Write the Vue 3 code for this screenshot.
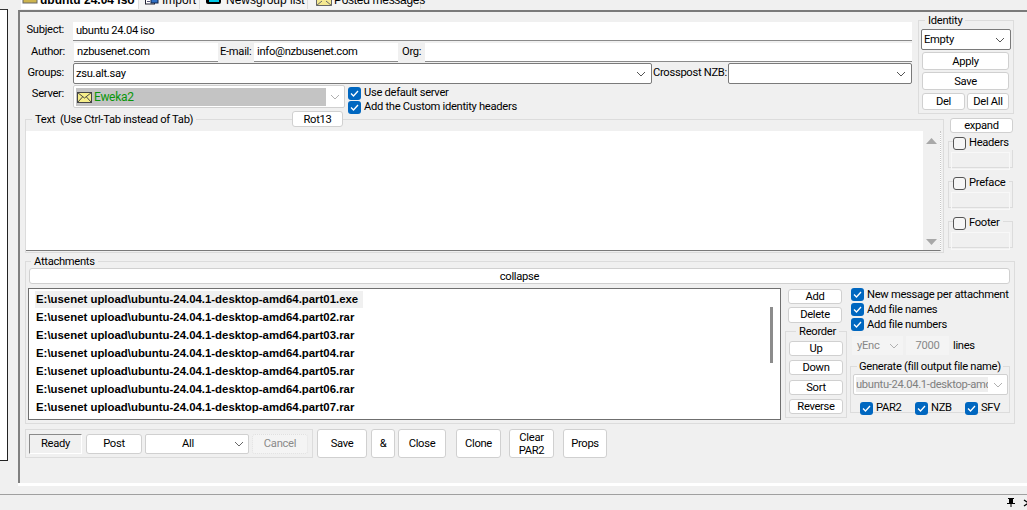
<script setup>
const files = ['part01.exe','part02.rar','part03.rar','part04.rar','part05.rar','part06.rar','part07.rar'].map(
  p => 'E:\\usenet upload\\ubuntu-24.04.1-desktop-amd64.' + p)
</script>

<template>
  <div class="win">
    <div class="top">
      <div class="leftpane"></div>
      <div class="main">
        <div class="tabs">
          <div class="tab active t1">
            <svg width="16" height="6" viewBox="0 0 16 6"><rect x="1" y="-4" width="14" height="7" fill="#cdb44e" stroke="#666"/></svg>
            <b>ubuntu 24.04 iso</b>
          </div>
          <div class="tab t2">
            <svg width="16" height="6" viewBox="0 0 16 6"><rect x="1.5" y="-3" width="9" height="7" fill="#fff" stroke="#223"/><rect x="7" y="-3" width="7" height="6" fill="#2f6fc4" stroke="#124"/><path d="M3 1.5H6" stroke="#557"/></svg>
            <span>Import</span>
          </div>
          <div class="tab t3">
            <svg width="16" height="6" viewBox="0 0 16 6"><rect x="0" y="-3" width="15" height="7" rx="2" fill="#000"/><rect x="3" y="-3" width="10" height="5" fill="#00c8e8"/></svg>
            <span>Newsgroup list</span>
          </div>
          <div class="tab t4">
            <svg width="16" height="6" viewBox="0 0 16 6"><path d="M.5 -3 V5.5 H15.5 V-3 Z" fill="#f4e890" stroke="#666"/><path d="M.5 5.5 L6 1 M15.5 5.5 L10 1" fill="none" stroke="#666"/></svg>
            <span>Posted messages</span>
          </div>
        </div>
        <div class="panel">
          <div class="upper">
            <div class="fields">
              <div class="row r-subject">
                <label class="lab">Subject:</label>
                <div class="edit line w-subject">ubuntu 24.04 iso</div>
              </div>
              <div class="row r-author">
                <label class="lab lab-au">Author:</label>
                <div class="edit line w-144">nzbusenet.com</div>
                <label class="lab2 w-mail">E-mail:</label>
                <div class="edit line w-144">info@nzbusenet.com</div>
                <label class="lab2 w-org">Org:</label>
                <div class="edit line w-orgin"></div>
              </div>
              <div class="row r-groups">
                <label class="lab">Groups:</label>
                <div class="combo dark w-groups">
                  <span>zsu.alt.say</span>
                  <svg class="chev" width="10" height="6" viewBox="0 0 10 6"><path d="M1 1 L5 5 L9 1" fill="none" stroke="#555"/></svg>
                </div>
                <label class="cross">Crosspost NZB:</label>
                <div class="combo dark w-cross">
                  <span></span>
                  <svg class="chev" width="10" height="6" viewBox="0 0 10 6"><path d="M1 1 L5 5 L9 1" fill="none" stroke="#555"/></svg>
                </div>
              </div>
              <div class="row r-server">
                <label class="lab">Server:</label>
                <div class="server">
                  <div class="sel">
                    <svg width="15" height="11" viewBox="0 0 15 11"><rect x=".5" y=".5" width="14" height="10" fill="#f6ee8a" stroke="#444"/><path d="M.5 .5 L7.5 6 L14.5 .5 M.5 10.5 L5.5 5 M14.5 10.5 L9.5 5" fill="none" stroke="#444"/></svg>
                    <span>Eweka2</span>
                  </div>
                  <svg class="chev light" width="10" height="6" viewBox="0 0 10 6"><path d="M1 1 L5 5 L9 1" fill="none" stroke="#b0b0b0"/></svg>
                </div>
                <div class="checks">
                  <div class="chk"><i class="box on"><svg width="13" height="13" viewBox="0 0 13 13"><path d="M3 6.5 L5.5 9 L10 4" fill="none" stroke="#fff" stroke-width="1.3"/></svg></i>Use default server</div>
                  <div class="chk"><i class="box on"><svg width="13" height="13" viewBox="0 0 13 13"><path d="M3 6.5 L5.5 9 L10 4" fill="none" stroke="#fff" stroke-width="1.3"/></svg></i>Add the Custom identity headers</div>
                </div>
              </div>
            </div>
            <fieldset class="identity">
              <legend>Identity</legend>
              <div class="combo dark idsel">
                <span>Empty</span>
                <svg class="chev" width="10" height="6" viewBox="0 0 10 6"><path d="M1 1 L5 5 L9 1" fill="none" stroke="#555"/></svg>
              </div>
              <button class="btn idb">Apply</button>
              <button class="btn idb">Save</button>
              <div class="dels">
                <button class="btn del1">Del</button>
                <button class="btn del2">Del All</button>
              </div>
            </fieldset>
          </div>

          <div class="middle">
            <fieldset class="textgroup">
              <legend>Text&nbsp; (Use Ctrl-Tab instead of Tab)</legend>
              <button class="btn rot">Rot13</button>
              <div class="textarea">
                <div class="vs">
                  <svg width="13" height="8" viewBox="0 0 13 8"><path d="M6.5 1 L12 7 H1 Z" fill="#a8a8a8"/></svg>
                  <svg width="13" height="8" viewBox="0 0 13 8"><path d="M6.5 7 L12 1 H1 Z" fill="#a8a8a8"/></svg>
                </div>
              </div>
            </fieldset>
            <div class="side">
              <button class="btn expand">expand</button>
              <div v-for="n in ['Headers','Preface','Footer']" :key="n" class="sidegroup">
                <div class="sidehead"><i class="box"></i><span>{{ n }}</span></div>
                <div class="sidebox"></div>
              </div>
            </div>
          </div>

          <fieldset class="attach">
            <legend>Attachments</legend>
            <button class="btn collapse">collapse</button>
            <div class="attrow">
              <div class="list">
                <div class="rows">
                  <div v-for="(f,i) in files" :key="f" class="file"><span :class="{ first: i === 0 }">{{ f }}</span></div>
                </div>
                <div class="thumb"></div>
              </div>
              <div class="ops">
                <button class="btn opb">Add</button>
                <button class="btn opb">Delete</button>
                <fieldset class="reorder">
                  <legend>Reorder</legend>
                  <button class="btn opb">Up</button>
                  <button class="btn opb">Down</button>
                  <button class="btn opb">Sort</button>
                  <button class="btn opb">Reverse</button>
                </fieldset>
              </div>
              <div class="opts">
                <div class="chk c2"><i class="box on"><svg width="13" height="13" viewBox="0 0 13 13"><path d="M3 6.5 L5.5 9 L10 4" fill="none" stroke="#fff" stroke-width="1.3"/></svg></i>New message per attachment</div>
                <div class="chk c2"><i class="box on"><svg width="13" height="13" viewBox="0 0 13 13"><path d="M3 6.5 L5.5 9 L10 4" fill="none" stroke="#fff" stroke-width="1.3"/></svg></i>Add file names</div>
                <div class="chk c2"><i class="box on"><svg width="13" height="13" viewBox="0 0 13 13"><path d="M3 6.5 L5.5 9 L10 4" fill="none" stroke="#fff" stroke-width="1.3"/></svg></i>Add file numbers</div>
                <div class="enc">
                  <div class="yenc"><span>yEnc</span><svg width="10" height="6" viewBox="0 0 10 6"><path d="M1 1 L5 5 L9 1" fill="none" stroke="#b0b0b0"/></svg></div>
                  <div class="lines">7000</div>
                  <span class="ltxt">lines</span>
                </div>
                <fieldset class="generate">
                  <legend>Generate (fill output file name)</legend>
                  <div class="gencombo">
                    <span class="gensel">ubuntu-24.04.1-desktop-amd</span>
                    <svg width="10" height="6" viewBox="0 0 10 6"><path d="M1 1 L5 5 L9 1" fill="none" stroke="#b0b0b0"/></svg>
                  </div>
                  <div class="genchk">
                    <div class="chk"><i class="box on"><svg width="13" height="13" viewBox="0 0 13 13"><path d="M3 6.5 L5.5 9 L10 4" fill="none" stroke="#fff" stroke-width="1.3"/></svg></i>PAR2</div>
                    <div class="chk"><i class="box on"><svg width="13" height="13" viewBox="0 0 13 13"><path d="M3 6.5 L5.5 9 L10 4" fill="none" stroke="#fff" stroke-width="1.3"/></svg></i>NZB</div>
                    <div class="chk"><i class="box on"><svg width="13" height="13" viewBox="0 0 13 13"><path d="M3 6.5 L5.5 9 L10 4" fill="none" stroke="#fff" stroke-width="1.3"/></svg></i>SFV</div>
                  </div>
                </fieldset>
              </div>
            </div>
          </fieldset>

          <div class="actions">
            <div class="postgroup">
              <div class="ready">Ready</div>
              <button class="btn post">Post</button>
              <div class="allsel">
                <span>All</span>
                <svg width="10" height="6" viewBox="0 0 10 6"><path d="M1 1 L5 5 L9 1" fill="none" stroke="#666"/></svg>
              </div>
              <button class="btn cancel">Cancel</button>
            </div>
            <button class="btn act a-save">Save</button>
            <button class="btn act a-amp">&amp;</button>
            <button class="btn act a-close">Close</button>
            <button class="btn act a-clone">Clone</button>
            <button class="btn act two a-clear">Clear<br>PAR2</button>
            <button class="btn act a-props">Props</button>
          </div>
        </div>
      </div>
    </div>
    <div class="footer">
      <svg width="8" height="9" viewBox="0 0 8 9"><path d="M1 0 H7 V1 H6 V5 H8 V6 H4.5 V9 H3.5 V6 H0 V5 H2 V1 H1 Z" fill="#000"/></svg>
      <svg class="x" width="7" height="8" viewBox="0 0 7 8"><path d="M1 1 L5.5 4 L1 7" fill="none" stroke="#000" stroke-width="1.4"/></svg>
    </div>
  </div>
</template>

<style>
html, body { margin: 0; background: #f0f0f0; overflow: hidden; }
</style>

<style scoped>
* { box-sizing: border-box; }
.win { width: 1027px; height: 510px; overflow: hidden; background: #f0f0f0; color: #000; font: 11.2px/14px Roboto, "Liberation Sans", Arial, sans-serif; letter-spacing: -.3px; }
.top { display: flex; height: 487px; }
.leftpane { width: 8px; height: 452px; margin-top: 9px; background: #fff; border-top: 1px solid #333; border-right: 1px solid #222; border-bottom: 1px solid #222; flex: none; }
.main { margin-left: 10px; flex: 1; min-width: 0; }
.tabs { display: flex; height: 10px; overflow: hidden; padding-left: 3px; }
.tab { height: 17px; margin-top: -8px; padding-top: 1px; flex: none; display: flex; gap: 2px; border-right: 1px solid #dcdcdc; white-space: nowrap; background: #f4f4f4; font: 12px/14px "Liberation Sans", Arial, sans-serif; letter-spacing: 0; }
.tab svg { flex: none; margin-top: 7px; }
.tab.active { background: #fff; }
.t1 { width: 118px; padding-left: 1px; }
.t2 { width: 61px; padding-left: 5px; }
.t3 { width: 108px; padding-left: 6px; gap: 4px; }
.t4 { width: 113px; padding-left: 8px; letter-spacing: -.3px; }
.panel { height: 473px; border-top: 2px solid #7a7a7a; border-left: 2px solid #808080; box-shadow: 0 3px 0 #fff; padding: 10px 0 0 5px; position: relative; }

.upper { display: flex; height: 85px; }
.fields { width: 893px; flex: none; }
.row { display: flex; }
.lab { width: 38px; text-align: right; flex: none; margin: 0 9px 0 1px; white-space: nowrap; }
.lab-au { width: 39px; }
.lab2 { flex: none; white-space: nowrap; padding-left: 2px; }
.w-mail { width: 36px; }
.w-org { width: 27px; padding-left: 4px; }
.w-subject { width: 839px; }
.w-144 { width: 144px; }
.w-orgin { width: 487px; }
.w-groups { width: 579px; }
.w-cross { width: 184px; }
.edit { background: #fff; padding: 2px 3px; flex: none; white-space: nowrap; }
.line { border-bottom: 1px solid #8a8a8a; }
.r-subject { height: 21px; align-items: flex-start; }
.r-subject .lab { padding-top: 1px; }
.r-subject .edit { height: 19px; padding-top: 2px; }
.r-author { height: 20px; }
.r-author .lab, .r-author .lab2 { padding-top: 2px; }
.r-author .edit { height: 19px; padding-top: 2px; }
.r-groups { height: 22px; }
.r-groups .lab { padding-top: 3px; }
.combo { position: relative; background: #fff; height: 21px; padding: 3px 2px; flex: none; }
.combo.dark { border: 1px solid #7a7a7a; border-radius: 2px; }
.chev { position: absolute; right: 5px; top: 7px; }
.cross { flex: none; width: 76px; padding: 3px 0 0 1px; white-space: nowrap; }
.r-server { height: 30px; }
.r-server .lab { padding-top: 2px; }
.server { position: relative; width: 272px; height: 23px; background: #fff; border: 1px solid #d0d0d0; border-radius: 2px; flex: none; padding: 2px; }
.sel { width: 250px; height: 18px; background: #c4c4c4; display: flex; align-items: center; gap: 2px; padding-left: 1px; color: #0a960a; font-size: 12px; }
.chev.light { top: 8px; right: 4px; }
.checks { margin-left: 3px; display: flex; flex-direction: column; padding-top: 1px; }
.chk { display: flex; align-items: center; height: 14px; white-space: nowrap; gap: 3px; }
.box { width: 13px; height: 13px; flex: none; border-radius: 3px; border: 1px solid #555; background: #f6f6f6; display: block; position: relative; }
.box.on { background: #0067c0; border: 0; }
.box svg { display: block; }

fieldset { border: 1px solid #dcdcdc; margin: 0; padding: 0; min-width: 0; position: relative; }
legend { padding: 0 3px; line-height: 13px; }

.identity { width: 96px; height: 100px; margin: -8px 0 0 0; padding: 0 2px; flex: none; }
.identity legend { margin-left: 4px; }
.idsel { width: 90px; margin-top: 2px; }
.btn { display: block; border: 1px solid #d0d0d0; border-radius: 3px; background: #fff; font: inherit; letter-spacing: inherit; color: #000; padding: 0; text-align: center; white-space: nowrap; }
.idb { width: 87px; height: 18px; margin: 2px 0 0 1px; line-height: 15px; }
.idb + .idb { margin-top: 2px; }
.dels { display: flex; gap: 2px; margin: 3px 0 0 1px; }
.dels .btn { height: 17px; line-height: 14px; }
.del1 { width: 43px; }
.del2 { width: 42px; }

.middle { display: flex; height: 146px; margin-top: 6px; align-items: flex-start; }
.textgroup { width: 919px; height: 140px; flex: none; }
.textgroup legend { margin-left: 6px; }
.rot { position: absolute; left: 266px; top: -15px; width: 51px; height: 16px; line-height: 13px; z-index: 2; }
.textarea { margin: 5px 2px 0 0; height: 120px; background: #fff; border-bottom: 1px solid #7a7a7a; border-right: 1px dotted #c8c8c8; position: relative; display: flex; justify-content: flex-end; }
.vs { width: 17px; background: #f0f0f0; display: flex; flex-direction: column; justify-content: space-between; align-items: center; padding: 6px 0 4px; }
.vs svg { display: block; }

.side { width: 66px; margin-left: 4px; flex: none; }
.expand { width: 63px; height: 15px; margin: 5px 0 0 2px; line-height: 12px; }
.sidegroup { position: relative; width: 65px; height: 33px; margin-top: 2px; border: 1px solid transparent; }
.sidegroup + .sidegroup { margin-top: 7px; }
.sidegroup::after { content: ""; position: absolute; inset: 6px 0 0 0; border: 1px solid #dcdcdc; margin: -1px; z-index: 0; }
.sidehead { position: relative; z-index: 1; display: flex; align-items: center; gap: 3px; height: 14px; width: max-content; margin-left: 4px; padding-right: 4px; background: #f0f0f0; }
.sidebox { position: relative; z-index: 1; margin: 2px 2px 0; height: 18px; border: 1px solid #f8f8f8; }

.attach { width: 990px; height: 169px; margin-top: -4px; padding: 0 3px; }
.attach legend { margin-left: 2px; }
.collapse { width: 981px; height: 16px; line-height: 13px; }
.attrow { display: flex; margin: 4px 0 0 -1px; }
.list { position: relative; width: 753px; height: 132px; background: #fff; border: 1px solid #6f6f6f; flex: none; padding: 2px 0 0 6px; }
.file { height: 18px; font: 700 11.4px/17px "Liberation Sans", Arial, sans-serif; letter-spacing: 0; white-space: nowrap; }
.file span { display: inline-block; padding: 0 2px 0 1px; }
.file .first { background: #f0f0f0; padding-right: 5px; }
.thumb { position: absolute; left: 741px; top: 18px; width: 3px; height: 56px; background: #8c8c8c; }
.ops { width: 70px; flex: none; padding: 1px 0 0 7px; }
.opb { width: 54px; height: 15px; line-height: 12px; }
.ops > .opb + .opb { margin-top: 3px; height: 16px; }
.reorder { width: 62px; height: 93px; margin: 2px 0 0 -3px; padding: 0 0 0 3px; }
.reorder legend { margin: 0 auto; }
.reorder .opb { margin-top: 4px; }
.reorder .opb:first-of-type { margin-top: 3px; }
.reorder .opb:nth-of-type(3) { margin-top: 5px; }
.opts { flex: 1; min-width: 0; margin: -1px 0 0 0; }
.c2 { height: 15px; }
.enc { display: flex; align-items: center; height: 19px; margin: 4px 0 0 1px; color: #888; }
.yenc { width: 51px; height: 19px; background: #f4f4f4; display: flex; align-items: center; justify-content: space-between; padding: 0 4px 0 5px; }
.lines { width: 43px; height: 19px; background: #f4f4f4; margin-left: 3px; line-height: 19px; text-align: center; }
.ltxt { margin-left: 4px; color: #000; }
.generate { width: 160px; height: 53px; margin: 5px 0 0 -1px; padding: 0 2px; }
.generate legend { margin-left: 4px; white-space: nowrap; padding: 0 2px; }
.gencombo { height: 21px; background: #fff; border: 1px solid #d0d0d0; border-radius: 2px; display: flex; align-items: center; padding: 0 4px 0 2px; justify-content: space-between; width: 155px; margin-top: 1px; }
.gensel { width: 132px; overflow: hidden; background: #eeeeee; color: #808080; white-space: nowrap; line-height: 15px; }
.genchk { display: flex; margin: 6px 0 0 7px; }
.genchk .chk:nth-child(1) { width: 55px; }
.genchk .chk:nth-child(2) { width: 50px; }

.actions { display: flex; align-items: flex-start; height: 29px; margin-top: 5px; }
.postgroup { display: flex; align-items: center; width: 288px; height: 29px; border: 1px solid #dcdcdc; padding: 0 0 0 3px; flex: none; gap: 4px; }
.ready { width: 53px; height: 20px; line-height: 18px; text-align: center; background: #f0f0f0; border: 1px solid; border-color: #8a8a8a #fff #fff #8a8a8a; }
.postgroup .btn { height: 20px; line-height: 17px; }
.post { width: 56px; }
.allsel { width: 104px; height: 20px; margin-left: -1px; background: #fff; border: 1px solid #d0d0d0; border-radius: 2px; display: flex; align-items: center; justify-content: space-between; padding: 0 4px 0 36px; }
.postgroup .cancel { width: 56px; margin-left: -1px; background: #f4f4f4; border: 1px dotted #e0e0e0; color: #8a8a8a; }
.act { height: 29px; line-height: 26px; flex: none; }
.act.two { line-height: 13px; }
.a-save { width: 50px; margin-left: 4px; }
.a-amp { width: 24px; margin-left: 4px; }
.a-close { width: 48px; margin-left: 3px; }
.a-clone { width: 45px; margin-left: 10px; }
.a-clear { width: 45px; margin-left: 8px; }
.a-props { width: 44px; margin-left: 9px; }
.footer { height: 16px; margin-top: 7px; border-top: 1px solid #a0a0a0; display: flex; justify-content: flex-end; align-items: center; gap: 8px; }
.footer svg { flex: none; }
.footer .x { margin-right: -3px; }
</style>
